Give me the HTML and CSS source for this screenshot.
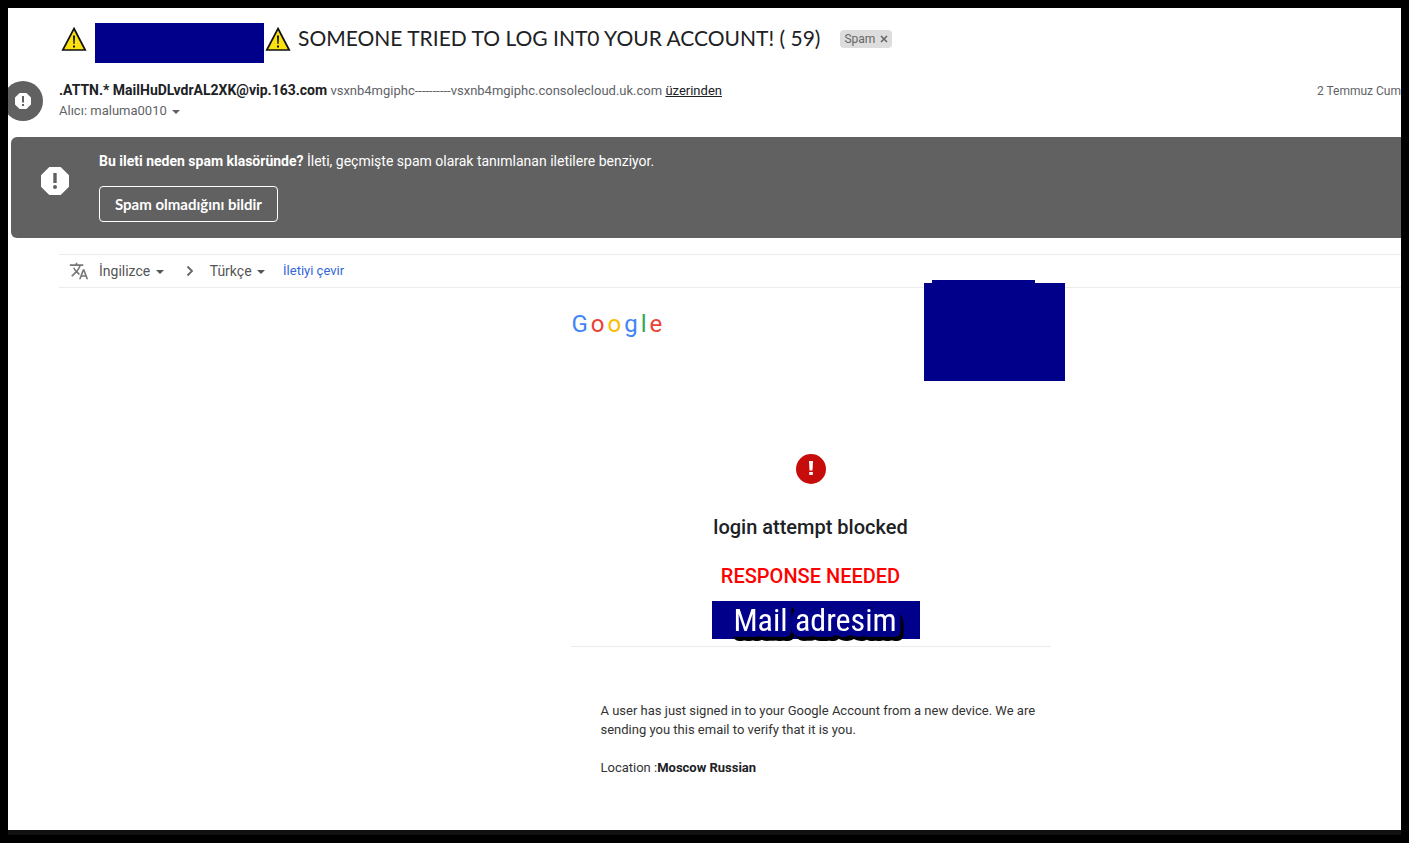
FILE: index.html
```html
<!DOCTYPE html>
<html lang="tr">
<head>
    <meta charset="UTF-8">
    <meta name="viewport" content="width=device-width, initial-scale=1.0">
    <title>Spam</title>
    <link rel="stylesheet" href="styles.css">
</head>
<body>
    <main class="mail">
        <div class="subject">
            <svg class="warning" viewBox="0 0 26 26"><path d="M13 2.5 24.2 24H1.8z" fill="#fbe10f" stroke="#111" stroke-width="1.7"/><path d="M12 9.5h2l-.4 8.5h-1.2zM12 19.5h2v2h-2z" fill="#111"/></svg>
            <span class="mask mask-name"></span>
            <svg class="warning" viewBox="0 0 26 26"><path d="M13 2.5 24.2 24H1.8z" fill="#fbe10f" stroke="#111" stroke-width="1.7"/><path d="M12 9.5h2l-.4 8.5h-1.2zM12 19.5h2v2h-2z" fill="#111"/></svg>
            <h1>SOMEONE TRIED TO LOG INT0 YOUR ACCOUNT! ( 59)</h1>
            <span class="label">Spam
                <button type="button" aria-label="Spam etiketini kaldır"><svg viewBox="0 0 8 8"><path d="M1 1l6 6M7 1L1 7" stroke="#666" stroke-width="1.6"/></svg></button>
            </span>
        </div>

        <header class="sender">
            <svg class="avatar" viewBox="0 0 40 40"><circle cx="20" cy="20" r="20" fill="#616161"/><path d="M16.6 12h6.8l4.6 4.6v6.8L23.4 28h-6.8L12 23.4v-6.8z" fill="#fff"/><path d="M19 15h2v6.5h-2zM19 23h2v2h-2z" fill="#616161"/></svg>
            <div class="sender-info">
                <p class="from"><strong>.ATTN.* MailHuDLvdrAL2XK@vip.163.com</strong> <span>vsxnb4mgiphc----------vsxnb4mgiphc.consolecloud.uk.com</span> <a href="#">üzerinden</a></p>
                <button type="button" class="to">Alıcı: maluma0010 <span class="arrow"></span></button>
            </div>
            <time class="date">2 Temmuz Cum</time>
        </header>

        <section class="banner">
            <svg class="banner-icon" viewBox="0 0 28 28"><path d="M8.3 0h11.4L28 8.3v11.4L19.7 28H8.3L0 19.7V8.3z" fill="#fff"/><path d="M12.3 6h3.4v10h-3.4z" fill="#616161"/><circle cx="14" cy="20" r="2" fill="#616161"/></svg>
            <div>
                <p><strong>Bu ileti neden spam klasöründe?</strong> İleti, geçmişte spam olarak tanımlanan iletilere benziyor.</p>
                <button type="button" class="not-spam">Spam olmadığını bildir</button>
            </div>
        </section>

        <div class="translate">
            <svg class="translate-icon" viewBox="0 0 24 24"><path fill="#757575" d="M12.87 15.07l-2.54-2.51.03-.03c1.74-1.94 2.98-4.17 3.71-6.53H17V4h-7V2H8v2H1v1.99h11.17C11.5 7.92 10.44 9.75 9 11.35 8.07 10.32 7.3 9.19 6.69 8h-2c.73 1.63 1.73 3.17 2.98 4.56l-5.09 5.02L4 19l5-5 3.11 3.11.76-2.04zM18.5 10h-2L12 22h2l1.12-3h4.75L21 22h2l-4.5-12zm-2.62 7l1.62-4.33L19.12 17h-3.24z"/></svg>
            <button type="button" class="language">İngilizce <span class="arrow"></span></button>
            <svg class="chevron" viewBox="0 0 8 12"><path d="M1.5 1.5 6 6l-4.5 4.5" fill="none" stroke="#666" stroke-width="1.8"/></svg>
            <button type="button" class="language">Türkçe <span class="arrow"></span></button>
            <a href="#">İletiyi çevir</a>
        </div>

        <article class="message">
            <span class="mask mask-photo"></span>
            <div class="logo">
                <span class="blue">G</span><span class="red">o</span><span class="yellow">o</span><span class="blue">g</span><span class="green">l</span><span class="red">e</span>
            </div>
            <div class="alert">
                <svg class="alert-icon" viewBox="0 0 30 30"><circle cx="15" cy="15" r="15" fill="#c70d0b"/><path d="M13 7h4l-.5 9.5h-3zM13.2 18h3.6v3h-3.6z" fill="#fff"/></svg>
                <h2>login attempt blocked</h2>
                <p class="response">RESPONSE NEEDED</p>
                <svg class="mask-mail" viewBox="0 0 208 38"><rect width="208" height="38" fill="#00008b"/><text x="103" y="30" text-anchor="middle">Mail adresim</text></svg>
            </div>
            <div class="text">
                <p>A user has just signed in to your Google Account from a new device. We are sending you this email to verify that it is you.</p>
                <p>Location :<strong>Moscow Russian</strong></p>
            </div>
        </article>
    </main>
    <div class="bottom-edge"></div>
</body>
</html>
```

FILE: styles.css
```css
* {
    box-sizing: border-box;
}

body {
    font-family: Roboto, sans-serif;
    background-color: #000;
    color: #202124;
    margin: 0;
    padding: 8px;
    display: flex;
    flex-direction: column;
    min-height: 100vh;
}

h1, h2, p {
    margin: 0;
}

svg {
    display: block;
    flex-shrink: 0;
}

button {
    font-family: inherit;
    background: none;
    border: none;
    padding: 0;
    cursor: pointer;
}

.mail {
    flex: 1;
    background-color: #fff;
    overflow: hidden;
}

.bottom-edge {
    height: 5px;
    background-color: #111;
}

.mask {
    background-color: #00008b;
}

.arrow {
    display: inline-block;
    border: 4px solid transparent;
    border-top-color: currentColor;
    border-bottom: none;
    vertical-align: middle;
    margin-left: 2px;
}

/* subject */
.subject {
    display: flex;
    align-items: flex-start;
    padding: 15px 0 0 53px;
}

.warning {
    width: 26px;
    height: 26px;
    margin-top: 3px;
}

.mask-name {
    width: 169px;
    height: 40px;
    margin: 0 1px 0 8px;
}

.subject h1 {
    font-family: Lato, sans-serif;
    font-size: 21px;
    font-weight: 400;
    line-height: 30px;
    margin-left: 7px;
    white-space: nowrap;
}

.label {
    display: flex;
    align-items: center;
    gap: 5px;
    background-color: #ddd;
    color: #666;
    border-radius: 4px;
    font-size: 12px;
    line-height: 18px;
    padding: 0 4px;
    margin: 7px 0 0 20px;
}

.label svg {
    width: 8px;
    height: 8px;
}

/* sender */
.sender {
    display: flex;
    padding-top: 17px;
    color: #5f6368;
}

.avatar {
    width: 40px;
    height: 40px;
    margin: 1px 0 0 -5px;
}

.sender-info {
    flex: 1;
    padding-left: 16px;
}

.from {
    font-size: 13px;
    line-height: 20px;
    white-space: nowrap;
}

.from strong {
    font-size: 14px;
    font-weight: 700;
    color: #202124;
}

.from a {
    color: #202124;
}

.to {
    display: block;
    font-size: 13px;
    line-height: 20px;
    color: #5f6368;
}

.date {
    font-size: 12px;
    line-height: 22px;
    white-space: nowrap;
}

/* spam banner */
.banner {
    display: flex;
    align-items: flex-start;
    background-color: #616161;
    color: #fff;
    border-radius: 6px 0 0 6px;
    margin: 16px 0 0 3px;
    padding: 14px 16px 16px 30px;
    font-size: 14px;
    line-height: 20px;
}

.banner-icon {
    width: 28px;
    height: 28px;
    margin: 16px 30px 0 0;
}

.banner strong {
    font-weight: 700;
}

.not-spam {
    display: block;
    font-family: Lato, sans-serif;
    font-size: 15px;
    font-weight: 700;
    line-height: 20px;
    color: #fff;
    border: 1px solid #fff;
    border-radius: 4px;
    padding: 7px 15px;
    margin-top: 15px;
}

/* translate bar */
.translate {
    display: flex;
    align-items: center;
    border-top: 1px solid #ececec;
    border-bottom: 1px solid #ececec;
    margin: 16px 0 0 51px;
    padding-left: 10px;
    font-size: 13px;
    line-height: 32px;
}

.translate-icon {
    width: 20px;
    height: 20px;
    margin-right: 10px;
}

.language {
    font-size: 14px;
    line-height: 32px;
    color: #555;
}

.chevron {
    width: 8px;
    height: 12px;
    margin: 0 16px 0 22px;
}

.translate a {
    color: #3367d6;
    text-decoration: none;
    margin-left: 18px;
}

/* message */
.message {
    position: relative;
    width: 480px;
    margin: 0 auto;
    left: 106px;
    padding: 20px 0;
}

.mask-photo {
    position: absolute;
    top: -5px;
    left: 353px;
    width: 141px;
    height: 98px;
}

.mask-photo::before {
    content: "";
    position: absolute;
    top: -3px;
    left: 8px;
    width: 103px;
    height: 3px;
    background-color: #00008b;
}

.logo {
    display: flex;
    gap: 3px;
    padding-left: 1px;
    font-size: 24px;
    line-height: 32px;
}

.blue { color: #4285f4; }
.red { color: #ea4335; }
.yellow { color: #fbbc05; }
.green { color: #34a853; }

.alert {
    display: flex;
    flex-direction: column;
    align-items: center;
    border-bottom: 1px solid #ececec;
    margin-top: 114px;
    padding-bottom: 7px;
}

.alert-icon {
    width: 30px;
    height: 30px;
}

.alert h2,
.response {
    font-size: 20px;
    font-weight: 500;
    line-height: 28px;
}

.alert h2 {
    margin-top: 29px;
}

.response {
    color: #f00;
    margin-top: 21px;
}

.mask-mail {
    width: 208px;
    height: 38px;
    margin: 11px 0 0 10px;
    overflow: visible;
}

.mask-mail text {
    font-family: "Roboto Condensed", "Liberation Sans Narrow", "DejaVu Sans Condensed", sans-serif;
    font-size: 32px;
    fill: #fff;
    stroke: #00008b;
    stroke-width: 12px;
    stroke-linejoin: round;
    paint-order: stroke;
    filter: drop-shadow(3px 4px 0 #000);
}

.text {
    padding: 54px 15px 0 30px;
    color: #333;
    font-size: 13px;
    line-height: 19px;
}

.text p {
    margin-bottom: 19px;
}

.text strong {
    font-weight: 700;
    color: #202124;
}
```
